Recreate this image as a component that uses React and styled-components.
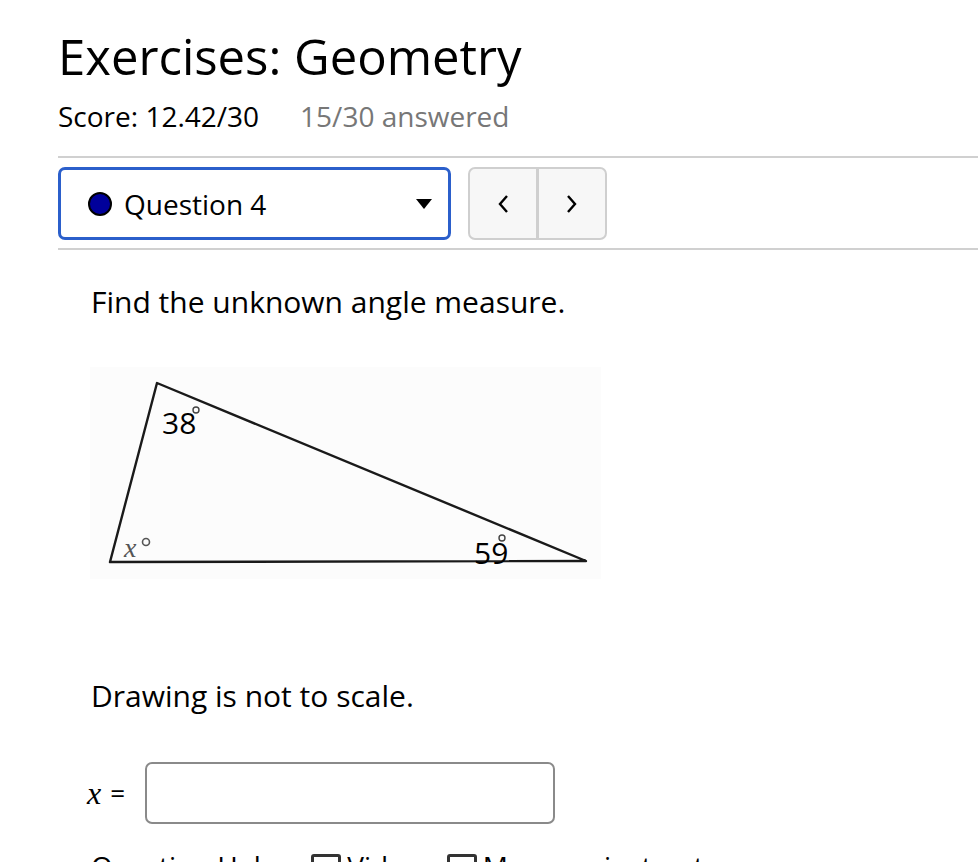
import React from "react";
import styled, { createGlobalStyle } from "styled-components";

const GlobalStyle = createGlobalStyle`
  body {
    margin: 0;
    background: #fff;
    font-family: "Open Sans", "Liberation Sans", sans-serif;
    color: #000;
  }
`;

const Page = styled.div`
  padding-left: 58px;
  overflow: hidden;
  height: 862px;
`;

const Title = styled.h1`
  margin: 28px 0 0;
  font-size: 49px;
  line-height: 56px;
  font-weight: 400;
`;

const ScoreRow = styled.div`
  display: flex;
  gap: 41px;
  margin-top: 13px;
  font-size: 28px;
  line-height: 38px;
`;

const Muted = styled.span`
  color: #777;
`;

const Rule = styled.hr`
  border: 0;
  height: 2px;
  background: #d0d0d0;
  margin: ${(p) => p.$top || 0}px 0 0;
`;

const Toolbar = styled.div`
  display: flex;
  align-items: center;
  gap: 17px;
  margin-top: 9px;
`;

const Select = styled.div`
  box-sizing: border-box;
  width: 393px;
  height: 73px;
  border: 3px solid #2b5fcb;
  border-radius: 7px;
  display: flex;
  align-items: center;
  padding: 0 16px 0 27px;
  font-size: 28px;
`;

const Dot = styled.span`
  width: 20px;
  height: 20px;
  border-radius: 50%;
  background: #00009b;
  border: 2px solid #000;
  margin-right: 12px;
`;

const Caret = styled.span`
  margin-left: auto;
  width: 0;
  height: 0;
  border-left: 8px solid transparent;
  border-right: 8px solid transparent;
  border-top: 10px solid #000;
`;

const NavGroup = styled.div`
  display: flex;
  height: 73px;
  box-sizing: border-box;
  border: 2px solid #cfcfcf;
  border-radius: 7px;
  background: #f7f7f7;
  overflow: hidden;
`;

const NavButton = styled.div`
  width: 66px;
  display: flex;
  align-items: center;
  justify-content: center;
  & + & {
    border-left: 3px solid #cfcfcf;
  }
`;

const Question = styled.div`
  padding-left: 33px;
`;

const Text = styled.p`
  margin: ${(p) => p.$top}px 0 0;
  font-size: 30px;
  line-height: 40px;
`;

const Figure = styled.svg`
  display: block;
  margin: 45px 0 0 -1px;
  background: #fcfcfc;
`;

const AnswerRow = styled.div`
  display: flex;
  align-items: center;
  margin: 46px 0 0 -4px;
`;

const MathVar = styled.span`
  font-family: "Liberation Serif", "DejaVu Serif", serif;
  font-style: italic;
  font-size: 32px;
`;

const Equals = styled.span`
  font-size: 26px;
  margin: 0 20px 0 9px;
`;

const AnswerInput = styled.input`
  box-sizing: border-box;
  width: 410px;
  height: 62px;
  border: 2px solid #8a8a8a;
  border-radius: 7px;
  background: #fff;
  font-size: 24px;
  padding: 0 12px;
`;

const HelpRow = styled.div`
  display: flex;
  align-items: center;
  gap: 6px;
  margin-top: 22px;
  font-size: 28px;
  line-height: 40px;
`;

const HelpBox = styled.span`
  display: inline-block;
  width: 24px;
  height: 18px;
  border: 3px solid #333;
  border-radius: 3px;
  margin-left: 20px;
`;

function Chevron({ dir }) {
  const d = dir === "left" ? "M11 2 L4 10 L11 18" : "M3 2 L10 10 L3 18";
  return (
    <svg width="14" height="20" viewBox="0 0 14 20">
      <path d={d} fill="none" stroke="#000" strokeWidth="2.4" />
    </svg>
  );
}

function Triangle() {
  return (
    <Figure width="511" height="212" viewBox="0 0 511 212">
      <path
        d="M67 16 L20 195 L496 194 Z"
        fill="none"
        stroke="#1a1a1a"
        strokeWidth="2.4"
        strokeLinejoin="round"
      />
      <text x="72" y="67" fontFamily="Open Sans, sans-serif" fontSize="30" fill="#000">
        38
      </text>
      <circle cx="106" cy="43" r="3" fill="none" stroke="#444" strokeWidth="1.4" />
      <text x="384" y="197" fontFamily="Open Sans, sans-serif" fontSize="30" fill="#000">
        59
      </text>
      <circle cx="412" cy="171" r="3" fill="none" stroke="#444" strokeWidth="1.4" />
      <text
        x="34"
        y="190"
        fontFamily="Liberation Serif, serif"
        fontStyle="italic"
        fontSize="28"
        fill="#555"
      >
        x
      </text>
      <circle cx="56" cy="175" r="3.5" fill="none" stroke="#555" strokeWidth="1.6" />
    </Figure>
  );
}

export default function App() {
  return (
    <>
      <GlobalStyle />
      <Page>
        <Title>Exercises: Geometry</Title>
        <ScoreRow>
          <span>Score: 12.42/30</span>
          <Muted>15/30 answered</Muted>
        </ScoreRow>
        <Rule $top={21} />
        <Toolbar>
          <Select>
            <Dot />
            Question 4
            <Caret />
          </Select>
          <NavGroup>
            <NavButton>
              <Chevron dir="left" />
            </NavButton>
            <NavButton>
              <Chevron dir="right" />
            </NavButton>
          </NavGroup>
        </Toolbar>
        <Rule $top={8} />
        <Question>
          <Text $top={32}>Find the unknown angle measure.</Text>
          <Triangle />
          <Text $top={97}>Drawing is not to scale.</Text>
          <AnswerRow>
            <MathVar>x</MathVar>
            <Equals>=</Equals>
            <AnswerInput type="text" />
          </AnswerRow>
          <HelpRow>
            <span>Question Help:</span>
            <HelpBox />
            <span>Video</span>
            <HelpBox />
            <span>Message instructor</span>
          </HelpRow>
        </Question>
      </Page>
    </>
  );
}
